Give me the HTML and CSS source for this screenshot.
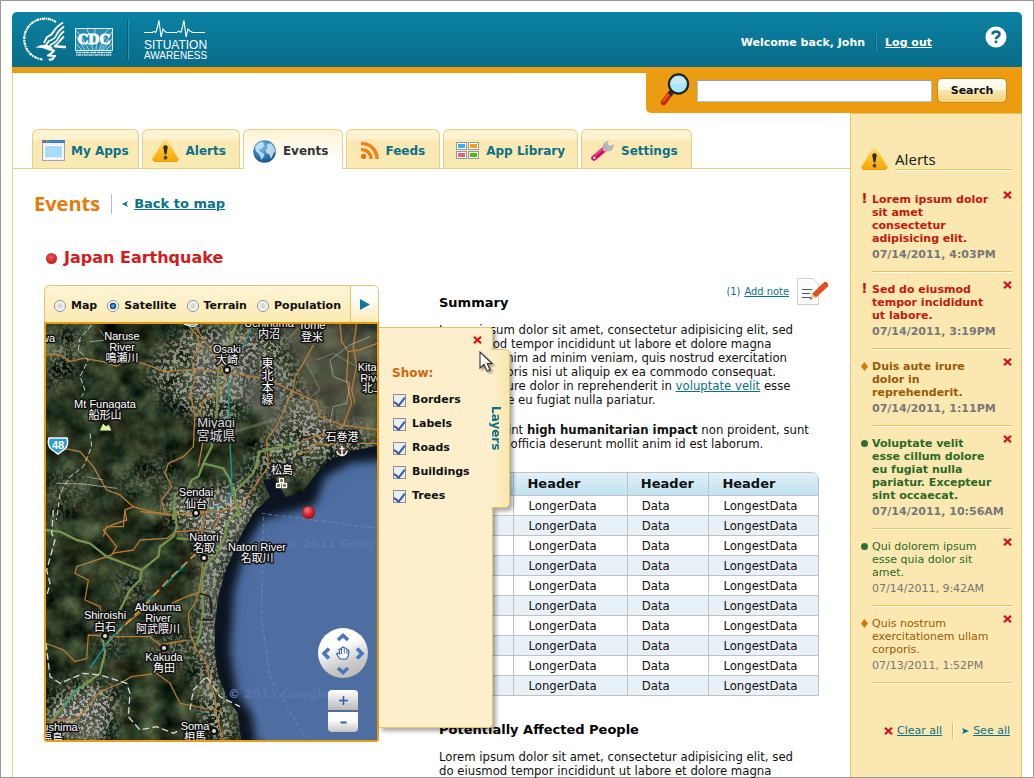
FILE: index.html
```html
<!DOCTYPE html>
<html lang="en">
<head>
<meta charset="utf-8">
<title>Situation Awareness - Events</title>
<link rel="stylesheet" href="styles.css">
</head>
<body>
<svg class="defs" width="0" height="0" aria-hidden="true">
  <defs>
    <linearGradient id="warn" x1="0" y1="0" x2="0" y2="1"><stop offset="0" stop-color="#fde28a"/><stop offset=".45" stop-color="#fcc02c"/><stop offset="1" stop-color="#fba806"/></linearGradient>
    <radialGradient id="redball" cx=".4" cy=".3" r=".7"><stop offset="0" stop-color="#f47c7c"/><stop offset=".6" stop-color="#d8232a"/><stop offset="1" stop-color="#a80f16"/></radialGradient>
    <symbol id="i-alert" viewBox="0 0 27 23">
      <path d="M11.200 1.800Q13.500-.8 15.800 1.800L26.300 19.500Q27.500 22.500 24 22.800H3Q-.5 22.500.7 19.500Z" fill="url(#warn)"/>
      <path d="M1 20.500Q1.500 22.600 4 22.600H23Q25.500 22.600 26 20.500" fill="none" stroke="#e09204" stroke-width=".8"/>
      <path d="M11.300 8.500Q11.300 6.200 13.500 6.200T15.700 8.500L14.300 15.600H12.700Z" fill="#2a2620"/><circle cx="13.500" cy="18.700" r="1.900" fill="#4b4436"/>
    </symbol>
    <symbol id="i-close" viewBox="0 0 9 8"><path d="M1 .8 8 7.200M8 .8 1 7.200" stroke="#d90d1e" stroke-width="2.200"/></symbol>
  </defs>
</svg>
<div class="frame">
  <header class="top">
    <div class="brand">
      <svg class="hhs" viewBox="0 0 44 44" role="img" aria-label="HHS">
        <path d="M19.500 42.500A20.500 20.500 0 1 1 33 5" fill="none" stroke="#fff" stroke-width="2.200" stroke-dasharray="3 .7 1.600 .6"/>
        <g fill="none" stroke="#fff" stroke-linejoin="round">
          <path d="M40 5.500Q33 10 31 14T24 20L21 26" stroke-width="1.800"/>
          <path d="M41 9.500Q35 14 33.500 18T26 24L23 28" stroke-width="1.800"/>
          <path d="M41 14Q36.500 18 35 21.500T28 27.500L26 31" stroke-width="1.800"/>
          <path d="M41 19.500Q38 22.500 36 25T31 29.500" stroke-width="1.800"/>
          <path d="M31 29Q39 30 43 30" stroke-width="2.400"/>
          <path d="M25 32 31 33.500Q28 37 25 38.500L33 39M26 42Q29 44 31 40" stroke-width="2.200"/>
        </g>
        <path d="M12 30.500Q18 27 24 27.500L30 31Q27 34 25 33Q20 30 12 30.500Z" fill="#fff"/>
      </svg>
      <svg class="cdc" viewBox="0 0 38 28" role="img" aria-label="CDC">
        <rect x=".5" y=".5" width="37" height="22" fill="#2b8dac" stroke="#d9eef4"/>
        <path d="M7 22 1 16M10 22 1 8M14 22 6 8M18 22 15 12M21 22 22 10M24 22 30 9M26 22 37 4M28 22 37 11M31 22 37 16M1 3 6 8M12 1l2 6M20 1v5M34 1 28 7" stroke="#c4e3ec" stroke-width=".8"/>
        <text x="19" y="16" text-anchor="middle" class="cdc-text">CDC</text>
        <path d="M1 24.500H37" stroke="#e8f5f8" stroke-width="1.300" stroke-dasharray="2 .4 3 .6 1 .4"/><path d="M1 27H37" stroke="#c9e4ec" stroke-width="1.400" stroke-dasharray="1.500 .6 3 .5"/>
      </svg>
      <div class="product">
        <svg class="pulse" viewBox="0 0 61 20" aria-hidden="true"><path d="M0 13.500H8.500Q10 11.500 11.500 13.500L12.500 11.500L15 1.500 17 18 19 10Q21.500 14 23.500 13.500H33Q35 10.500 36.500 13.500L37.500 12 40 1.500 42 18 44 10Q47 14 50 13.500H61" fill="none" stroke="#fff" stroke-width="1.100"/></svg>
        <span class="product-1">SITUATION</span>
        <span class="product-2">AWARENESS</span>
      </div>
    </div>
    <div class="account">
      <span class="welcome">Welcome back, John</span>
      <a class="logout" href="#">Log out</a>
      <button class="help" type="button" aria-label="Help">
        <svg viewBox="0 0 22 22"><circle cx="11" cy="11" r="10.500" fill="#fff"/><path d="M7.500 8.500Q7.500 5.500 11 5.500T14.500 8.300Q14.500 10 12.500 11 11 11.700 11 13.200" fill="none" stroke="#0a6c8c" stroke-width="2.600"/><rect x="9.600" y="14.600" width="2.800" height="2.600" rx="1" fill="#0a6c8c"/></svg>
      </button>
    </div>
  </header>

  <div class="shell">
    <form class="search" role="search">
      <svg class="lens" viewBox="0 0 30 34" aria-hidden="true">
        <path d="M10 21 3.500 29.500" stroke="#b92d04" stroke-width="5.500" stroke-linecap="round"/><path d="M9.500 20 3.500 28" stroke="#ef5a1c" stroke-width="2" stroke-linecap="round"/>
        <path d="M12.500 18 9.500 21.500" stroke="#2b2b2b" stroke-width="5"/>
        <circle cx="18.500" cy="11" r="9.600" fill="#a6e9fb" stroke="#1e2326" stroke-width="2.200"/>
        <path d="M11 10Q12 4 18.500 3.800T26 10Q23 11.500 18.500 11T11 10Z" fill="#d9e6e8" opacity=".8"/>
      </svg>
      <input class="search-box" type="text" aria-label="Search">
      <button class="search-btn" type="submit">Search</button>
    </form>

    <div class="columns">
      <main class="main">
        <nav class="tabs">
          <a class="tab snug" href="#"><svg class="w23" viewBox="0 0 23 21"><rect x=".5" y=".5" width="22" height="20" fill="#eef2f6" stroke="#9aa6b4"/><rect width="23" height="3" fill="#3f7fce"/><path d="M1 1.500H4" stroke="#e44" stroke-width="1.500"/><path d="M4 1.500H7" stroke="#5c4" stroke-width="1.500"/><rect x="2.500" y="5.500" width="18" height="12.500" fill="#a6dcf7" stroke="#fff"/></svg><span>My Apps</span></a>
          <a class="tab" href="#"><svg class="w27" viewBox="0 0 27 23"><use href="#i-alert"/></svg><span>Alerts</span></a>
          <a class="tab active" href="#"><svg class="w23" viewBox="0 0 23 23"><defs><radialGradient id="globe" cx=".4" cy=".3" r=".75"><stop offset="0" stop-color="#7fc0e8"/><stop offset=".6" stop-color="#2f78ad"/><stop offset="1" stop-color="#174f7e"/></radialGradient></defs><circle cx="11.500" cy="11.500" r="11.300" fill="url(#globe)"/><path d="M2 7Q4 3 8 2L11 2.500 10 4 11.500 5.500 9.500 7 8 9.500 6 9 6.500 11 9 12.500 11.500 14 10.500 17 8.500 20 7.500 17 6 14 3 11ZM13.500 6 15 3.500 18.500 3.500Q22 7 22.400 11L20.500 13.500 19 17 17.500 18.500 16.500 14.500 13.500 13 12.500 10 14.500 8.500Z" fill="#cfe6f4" opacity=".85"/></svg><span>Events</span></a>
          <a class="tab roomy" href="#"><svg class="w18" viewBox="0 0 18 17"><g fill="none" stroke="#f57e1a" stroke-width="3.400"><path d="M0 1.700A15 15 0 0 1 16 17"/><path d="M0 7.700A9 9 0 0 1 10 17"/></g><circle cx="2.600" cy="14.300" r="2.600" fill="#ee6c10"/></svg><span>Feeds</span></a>
          <a class="tab even" href="#"><svg class="w23" viewBox="0 0 23 17"><g fill="#fff" stroke="#96989c"><rect x=".5" y=".5" width="10" height="7"/><rect x="12.500" y=".5" width="10" height="7"/><rect x=".5" y="9.500" width="10" height="7"/><rect x="12.500" y="9.500" width="10" height="7"/></g><path fill="#3cb0ea" d="M2 2h7v4H2z"/><path fill="#eda21c" d="M14 2h7v4h-7z"/><path fill="#ee5c88" d="M2 11h7v4H2z"/><path fill="#41bf0c" d="M14 11h7v4h-7z"/></svg><span>App Library</span></a>
          <a class="tab" href="#"><svg class="w23" viewBox="0 0 23 21"><path d="M3 18 12.500 10" stroke="#d80b5c" stroke-width="5.500" stroke-linecap="round"/><path d="M4 15.500 11 9.500" stroke="#f3569a" stroke-width="1.200"/><circle cx="3.300" cy="17.700" r="1.200" fill="#fff"/><path d="M12 11Q9.500 2.500 18 .3L16.500 4 19 6 22.800 4Q23 12 15 11.500Z" fill="#b4b6b8"/></svg><span>Settings</span></a>
        </nav>

        <div class="crumb">
          <h1>Events</h1>
          <span class="back"><svg class="tri-l" viewBox="0 0 6 6"><path d="M6 0 4.500 3 6 6 0 3Z" fill="#0c7089"/></svg><a href="#">Back to map</a></span>
        </div>
        <h2 class="event"><span class="ball"></span>Japan Earthquake</h2>

        <div class="detail">
          <section class="map-card">
            <div class="map-bar">
              <fieldset class="modes" aria-label="Map type">
                <label><input type="radio" name="mode">Map</label>
                <label><input type="radio" name="mode" checked>Satellite</label>
                <label><input type="radio" name="mode">Terrain</label>
                <label><input type="radio" name="mode">Population</label>
              </fieldset>
              <button class="more" type="button" aria-label="More"><svg viewBox="0 0 10 11"><path d="M0 0 10 5.500 0 11Z" fill="#0b7a9c"/></svg></button>
            </div>
            <div class="map">
              <svg class="map-art" viewBox="46 324 331 416" role="img" aria-label="Satellite map">
                <defs>
                  <filter id="terrain" x="0" y="0" width="1" height="1" color-interpolation-filters="sRGB">
                    <feTurbulence type="fractalNoise" baseFrequency=".05" numOctaves="6" seed="11"/>
                    <feColorMatrix values=".4 .22 0 0 -.15  .36 .32 0 0 -.13  .25 .25 0 0 -.12  0 0 0 0 1"/>
                  </filter>
                  <filter id="speck" x="0" y="0" width="1" height="1" color-interpolation-filters="sRGB">
                    <feTurbulence type="fractalNoise" baseFrequency=".3" numOctaves="3" seed="3"/>
                    <feColorMatrix values="0 0 0 0 .7  0 0 0 0 .69  0 0 0 0 .66  9 0 0 0 -4.300"/>
                  </filter>
                  <filter id="soft" x="-.3" y="-.3" width="1.600" height="1.600"><feGaussianBlur stdDeviation="9"/></filter>
                  <filter id="soft5" x="-.3" y="-.3" width="1.600" height="1.600"><feGaussianBlur stdDeviation="4"/></filter>
                  <mask id="urban">
                    <g filter="url(#soft)" fill="#fff">
                      <path d="M185 325H280L300 390 340 430 370 425V460L330 450 290 420 260 360 240 420 210 430 165 400 145 370Z" opacity=".8"/>
                      <path d="M165 495 250 480 262 505 236 540 215 600 218 680 240 740H205L195 640 205 560 190 530 165 520Z"/>
                      <path d="M240 470 280 420 320 420 340 460 270 480Z" opacity=".8"/>
                      <path d="M46 330 90 330 70 380 46 390Z" opacity=".5"/>
                      <path d="M46 700 80 680 120 690 110 740H46Z"/>
                      <path d="M95 625 115 615 125 650 105 660ZM150 640 185 630 190 665 160 665Z" opacity=".6"/>
                      <path d="M110 580 140 570 150 600 125 610Z" opacity=".5"/>
                      <path d="M46 470 95 470 90 500 60 520 46 560Z" opacity=".3"/>
                      <path d="M110 480 170 450 180 480 130 500Z" opacity=".35"/>
                    </g>
                  </mask>
                  <path id="sea" d="M377 446 350 451 328 461 314 476 303 492 286 497 275 478 263 480 270 497 254 512 240 537 227 567 219 593 215 622 215 652 218 675 228 700 238 713 241 740H377Z"/>
                  <clipPath id="seaclip"><use href="#sea"/></clipPath>
                </defs>
                <rect x="46" y="324" width="331" height="416" filter="url(#terrain)"/>
                <path d="M275 324H377V430L330 445 290 425 300 380Z" fill="#7d7466" opacity=".45" filter="url(#soft5)"/>
                <path d="M190 340 250 330 290 380 280 440 240 400 190 400ZM175 490 250 490 250 520 222 560 212 640 214 700 206 700 200 600 200 540ZM46 715 85 690 110 700 100 740H46Z" fill="#70716a" opacity=".55" filter="url(#soft5)"/>
                <path d="M205 440 240 430 290 415 270 405 300 390" fill="none" stroke="#8b8470" stroke-width="3" opacity=".4"/>
                <g mask="url(#urban)"><rect x="46" y="324" width="331" height="416" filter="url(#speck)"/></g>
                <use href="#sea" fill="#0b1420"/>
                <g clip-path="url(#seaclip)">
                  <path d="M385 460 350 463 325 477 315 505 290 512 262 520 245 550 234 590 230 650 236 690 252 715 256 745H385Z" fill="#4c6c9f" filter="url(#soft5)"/>
                  <path d="M385 475 350 480 328 500 315 520 285 525 266 540 252 570 245 620 250 690 268 745H385Z" fill="#4e6ea2"/>
                </g>
                <g transform="translate(40 280) scale(.3333)" fill="none" stroke-linejoin="round">
                  <g stroke="#b87d35" stroke-width="4">
                    <path d="M10 222 60 225 90 245 130 235 190 245 230 258 265 243 310 250 375 275 460 268 590 280 690 300 760 335 830 365 840 410 905 435 1012 450"/>
                    <path d="M440 130 470 165 480 200 455 240 465 300 450 340 465 400 460 500 430 530 385 550 375 580 395 620 365 660 375 700"/>
                    <path d="M465 140 500 190 530 230 560 300 535 345 490 360 480 400 490 480 475 560"/>
                    <path d="M900 130 905 185 925 215 920 300 935 370 905 450M950 130 940 200 950 260 935 330 945 370"/>
                    <path d="M820 195 790 250 765 290 760 330 740 370 710 440 680 480 685 560 650 610 600 680"/>
                    <path d="M770 500 790 480 860 460 930 455 905 485 860 495 830 490 805 515 770 520M960 490H1012"/>
                    <path d="M45 500 120 515 160 560 200 630 240 645 280 680 330 695 400 705 540 695 600 675"/>
                    <path d="M1012 190 960 210 925 215M590 240 610 170 640 130"/>
                    <path d="M280 680 255 690 250 740 200 740 190 770"/>
                  </g>
                  <g stroke="#74954d" stroke-width="7">
                    <path d="M590 130 570 190 540 210 535 280 530 400 515 500 495 540 475 590 455 600 440 640 405 640 400 720"/>
                    <path d="M765 497 700 505 660 515 640 580 600 620 580 640 590 670 600 720M490 550 550 565 570 600 580 640"/>
                  </g>
                  <g stroke="#c9ccc4" stroke-width="3">
                    <path d="M155 135 120 175 115 210 145 240 120 290 135 330 125 350M150 460 155 500 130 560 90 590 60 640 50 720" stroke-dasharray="16 8"/>
                    <path d="M180 150 200 180 150 185M50 610 130 612 230 625M140 590 190 600" stroke-width="2"/>
                    <path d="M990 170 930 195 870 240 880 290 930 310 920 370 880 380 870 430" stroke="#c8c0b4" opacity=".6"/>
                    <path d="M780 140 700 220 640 200M800 250 840 330 800 360M950 260 880 220 830 240" opacity=".4"/>
                  </g>
                  <path d="M635 140 600 220M565 290 568 460 575 580 575 640 560 660M540 675 510 695" stroke="#17989b" stroke-width="4"/>
                </g>
                <g transform="translate(40 510) scale(.3333)" fill="none" stroke-linejoin="round">
                  <g stroke="#b57a33" stroke-width="4">
                    <path d="M255 0 260 30 215 45 190 60 230 110 215 135 110 170 105 190 145 210 135 270 180 290 190 345"/>
                    <path d="M215 130 280 120 300 90 380 85 410 65 490 60M300 5 400 15 530 0M480 0 495 30 485 60 500 110 540 80"/>
                    <path d="M18 400 70 420 105 455 140 445 145 375 210 380 330 380 360 405 440 390"/>
                    <path d="M490 145 480 230 465 280 445 310 450 370 470 420 500 460 510 520 525 560 530 620 550 690"/>
                    <path d="M350 490 275 500 240 520 180 545 110 630 20 630M350 490 390 520 420 580 470 590 545 605M540 15 520 60"/>
                    <path d="M395 280 440 260 480 245M260 340 310 300 330 270"/>
                  </g>
                  <g stroke="#74954d" stroke-width="7">
                    <path d="M18 60 60 65 110 90 150 100 200 140 305 180 355 140 360 110 400 80 410 50 405 0"/>
                    <path d="M305 180 300 210 270 240 245 290 220 330 185 370 195 430 180 490 140 520 110 540 70 590 30 640"/>
                    <path d="M600 0 560 40 555 80 530 130 500 160 485 210 490 300 480 370 470 405M410 85 490 90"/>
                  </g>
                  <path d="M500 100 390 205 300 300 240 360 200 400" stroke="#ef962c" stroke-width="5" stroke-dasharray="26 14"/>
                  <path d="M435 165 370 230M340 255 320 275M250 345 200 400 150 475M120 525 75 590M520 0 510 10" stroke="#17989b" stroke-width="4"/>
                  <g stroke="#d6d8d2" stroke-width="4" stroke-dasharray="20 10">
                    <path d="M40 0 35 70 45 90 20 180 30 220 20 260M18 400 30 500 60 520 130 490 180 495 260 520 270 550 265 620 300 660 350 650 400 670 460 640 M450 600 460 540 500 500 540 560 600 590"/>
                  </g>
                  <path d="M480 250 510 260 515 310M485 330 520 330" stroke="#151515" stroke-width="4"/>
                  <path d="M665 10 1012 55M670 20 665 330 690 500 800 690" stroke="#8290c4" stroke-width="2" stroke-dasharray="12 8"/>
                </g>
                <g class="wm"><text x="228" y="698">© 2011 Google</text><text x="286" y="548">© 2011 Goog</text></g>
                <g class="lbl">
                  <text x="48" y="342">wa</text>
                  <text x="122" y="340"><tspan x="122">Naruse</tspan><tspan x="122" dy="11">River</tspan><tspan x="122" dy="11">鳴瀬川</tspan></text>
                  <text x="227" y="353">Osaki<tspan x="227" dy="11">大崎</tspan></text>
                  <text x="269" y="327">Uchinuma<tspan x="269" dy="11">内沼</tspan></text>
                  <text x="312" y="329">Tome<tspan x="312" dy="12">登米</tspan></text>
                  <text x="105" y="408">Mt Funagata<tspan x="105" dy="11">船形山</tspan></text>
                  <text x="373" y="371">Kitaka<tspan x="373" dy="11">River</tspan><tspan x="373" dy="10">北上</tspan></text>
                  <text x="196" y="496">Sendai<tspan x="196" dy="12">仙台</tspan></text>
                  <text x="204" y="541">Natori<tspan x="204" dy="11">名取</tspan></text>
                  <text x="257" y="551">Natori River<tspan x="257" dy="11">名取川</tspan></text>
                  <text x="105" y="619">Shiroishi<tspan x="105" dy="12">白石</tspan></text>
                  <text x="158" y="611">Abukuma<tspan x="158" dy="11">River</tspan><tspan x="158" dy="11">阿武隈川</tspan></text>
                  <text x="164" y="661">Kakuda<tspan x="164" dy="11">角田</tspan></text>
                  <text x="60" y="731">ushima<tspan x="52" dy="11">福島</tspan></text>
                  <text x="195" y="730">Soma<tspan x="195" dy="11">相馬</tspan></text>
                  <text x="342" y="441">石巻港</text>
                  <text x="282" y="474">松島</text>
                  <text class="big" x="216" y="427">Miyagi<tspan x="216" dy="13">宮城県</tspan></text>
                  <text class="vert" x="266" y="357">東北本線</text>
                </g>
                <g fill="#ddd" stroke="#111" stroke-width="2"><circle cx="227" cy="370" r="3"/><circle cx="196" cy="513" r="3"/><circle cx="204" cy="558" r="3"/><circle cx="105" cy="636" r="3"/><circle cx="164" cy="648" r="3"/><circle cx="214" cy="731" r="3"/></g>
                <path d="M99 431 103 423 106 426 109 424 112 431Z" fill="#d9f49b" stroke="#222"/>
                <path d="M49 438H67Q69 445 65 449L58 454 51 449Q47 445 49 438Z" fill="#2a9bd3" stroke="#fff" stroke-width="1.500"/><text class="shield" x="58" y="449">48</text>
                <path d="M184 324H198Q194 328 190 326Z" fill="#2a9bd3" stroke="#fff"/>
                <g fill="#7b5a4e" stroke="#fff" stroke-width="1.300"><rect x="279.500" y="478.500" width="4" height="4"/><rect x="276.500" y="483.500" width="4" height="4"/><rect x="282.500" y="483.500" width="4" height="4"/></g>
                <g><circle cx="342" cy="451" r="5.500" fill="#5b3c36" opacity=".8"/><path d="M342 446V455M339.500 448.500H344.500M337 451Q337.500 455 342 455.500 346.500 455 347 451" fill="none" stroke="#fff" stroke-width="1.400"/></g>
                <circle cx="308.500" cy="512.500" r="6.200" fill="url(#redball)" stroke="#8d1218" stroke-width=".6"/>
              </svg>
              <div class="controls">
                <button class="pan" type="button" aria-label="Pan map">
                  <svg viewBox="0 0 50 50"><g fill="none" stroke="#4877c0" stroke-width="3.600"><path d="M20 12 25 7.500 30 12M20 40 25 44.500 30 40M11 20.500 6 25.500 11 30.500M39 20.500 44 25.500 39 30.500"/></g><path d="M22 31 18.500 26Q20 24 22 26.500L21 21.500Q22.300 20 23.500 22L24 19.500Q25.500 18.500 26.300 20L27.500 20Q29 20 29 22 30.500 21.500 31 23L30 28.500 28.500 31Z" fill="#fff" stroke="#2c5fb0" stroke-width="1.100"/><path d="M23.500 22V26M26.300 20.500V25.500M29 22V26" stroke="#2c5fb0" stroke-width=".9"/></svg>
                </button>
                <button class="zoom in" type="button" aria-label="Zoom in"><svg viewBox="0 0 11 11"><path d="M5.500 1V10M1 5.500H10" stroke="#2f5ea8" stroke-width="1.600"/></svg></button>
                <button class="zoom out" type="button" aria-label="Zoom out"><svg viewBox="0 0 11 11"><path d="M2.500 5.500H8.500" stroke="#2f5ea8" stroke-width="2"/></svg></button>
              </div>
            </div>
            <aside class="layers">
              <div class="layers-body">
                <button class="x" type="button" aria-label="Close layers"><svg viewBox="0 0 9 8"><use href="#i-close"/></svg></button>
                <h3>Show:</h3>
                <label><input type="checkbox" checked>Borders</label>
                <label><input type="checkbox" checked>Labels</label>
                <label><input type="checkbox" checked>Roads</label>
                <label><input type="checkbox" checked>Buildings</label>
                <label><input type="checkbox" checked>Trees</label>
              </div>
              <button class="layers-tab" type="button">Layers</button>
              <svg class="cursor" viewBox="0 0 18 24" aria-hidden="true"><path d="M1 1V17L5 13.500 8 20 11 18.700 8.200 12.500H13Z" fill="#fff" stroke="#333" stroke-width="1.100"/></svg>
            </aside>
          </section>

          <article class="article">
            <div class="article-head">
              <h3>Summary</h3>
              <span class="note">(1) <a href="#">Add note</a>
                <svg viewBox="0 0 31 27"><path d="M.5.500H16L21.500 6V26.500H.5Z" fill="#fcfcfc" stroke="#cfcfcf"/><path d="M5 11.500H15M5 15.500H13M5 19.500H14" stroke="#555"/><path d="M15 16 26 5 30.500 9 19 19.500Z" fill="#e2501c"/><path d="M26 5Q28.500 3 30.500 5.500T30.500 9Z" fill="#cc3f10"/><path d="M15 16 13 21.500 19 19.500Z" fill="#e9c98a"/><path d="M13.700 19.500 13 21.500 15 20.900Z" fill="#222"/></svg>
              </span>
            </div>
            <p>Lorem ipsum dolor sit amet, consectetur adipisicing elit, sed<br>do eiusmod tempor incididunt ut labore et dolore magna<br>aliqua. Ut enim ad minim veniam, quis nostrud exercitation<br>ullamco laboris nisi ut aliquip ex ea commodo consequat.<br>Duis aute irure dolor in reprehenderit in <a href="#">voluptate velit</a> esse<br>cillum dolore eu fugiat nulla pariatur.</p>
            <p>Excepteur sint <b>high humanitarian impact</b> non proident, sunt<br>in culpa qui officia deserunt mollit anim id est laborum.</p>
            <table>
              <colgroup><col class="c1"><col class="c2"><col class="c3"><col class="c4"></colgroup>
              <thead><tr><th>Header</th><th>Header</th><th>Header</th><th>Header</th></tr></thead>
              <tbody>
                <tr><td>Data</td><td>LongerData</td><td>Data</td><td>LongestData</td></tr>
                <tr><td>Data</td><td>LongerData</td><td>Data</td><td>LongestData</td></tr>
                <tr><td>Data</td><td>LongerData</td><td>Data</td><td>LongestData</td></tr>
                <tr><td>Data</td><td>LongerData</td><td>Data</td><td>LongestData</td></tr>
                <tr><td>Data</td><td>LongerData</td><td>Data</td><td>LongestData</td></tr>
                <tr><td>Data</td><td>LongerData</td><td>Data</td><td>LongestData</td></tr>
                <tr><td>Data</td><td>LongerData</td><td>Data</td><td>LongestData</td></tr>
                <tr><td>Data</td><td>LongerData</td><td>Data</td><td>LongestData</td></tr>
                <tr><td>Data</td><td>LongerData</td><td>Data</td><td>LongestData</td></tr>
                <tr><td>Data</td><td>LongerData</td><td>Data</td><td>LongestData</td></tr>
              </tbody>
            </table>
            <h3 class="people">Potentially Affected People</h3>
            <p class="last">Lorem ipsum dolor sit amet, consectetur adipisicing elit, sed<br>do eiusmod tempor incididunt ut labore et dolore magna</p>
          </article>
        </div>
      </main>

      <aside class="side">
        <div class="side-head"><svg viewBox="0 0 27 23"><use href="#i-alert"/></svg><h2>Alerts</h2></div>
        <ul class="alerts">
          <li class="red new"><span class="mark bang">!</span><div><p>Lorem ipsum dolor sit amet consectetur adipisicing elit.</p><time>07/14/2011, 4:03PM</time></div><button class="x" type="button" aria-label="Dismiss"><svg viewBox="0 0 9 8"><use href="#i-close"/></svg></button></li>
          <li class="red new"><span class="mark bang">!</span><div><p>Sed do eiusmod tempor incididunt ut labore.</p><time>07/14/2011, 3:19PM</time></div><button class="x" type="button" aria-label="Dismiss"><svg viewBox="0 0 9 8"><use href="#i-close"/></svg></button></li>
          <li class="amber new"><svg class="mark" viewBox="0 0 7 9"><path d="M3.500 0 7 4.500 3.500 9 0 4.500Z" fill="#d07a0a"/></svg><div><p>Duis aute irure dolor in reprehenderit.</p><time>07/14/2011, 1:11PM</time></div><button class="x" type="button" aria-label="Dismiss"><svg viewBox="0 0 9 8"><use href="#i-close"/></svg></button></li>
          <li class="green new"><svg class="mark" viewBox="0 0 7 9"><circle cx="3.500" cy="4.500" r="3.500" fill="#2f7030"/></svg><div><p>Voluptate velit esse cillum dolore eu fugiat nulla pariatur. Excepteur sint occaecat.</p><time>07/14/2011, 10:56AM</time></div><button class="x" type="button" aria-label="Dismiss"><svg viewBox="0 0 9 8"><use href="#i-close"/></svg></button></li>
          <li class="green"><svg class="mark" viewBox="0 0 7 9"><circle cx="3.500" cy="4.500" r="3.500" fill="#2f7030"/></svg><div><p>Qui dolorem ipsum esse quia dolor sit amet.</p><time>07/14/2011, 9:42AM</time></div><button class="x" type="button" aria-label="Dismiss"><svg viewBox="0 0 9 8"><use href="#i-close"/></svg></button></li>
          <li class="amber"><svg class="mark" viewBox="0 0 7 9"><path d="M3.500 0 7 4.500 3.500 9 0 4.500Z" fill="#d07a0a"/></svg><div><p>Quis nostrum exercitationem ullam corporis.</p><time>07/13/2011, 1:52PM</time></div><button class="x" type="button" aria-label="Dismiss"><svg viewBox="0 0 9 8"><use href="#i-close"/></svg></button></li>
        </ul>
        <div class="side-foot">
          <span class="clear"><svg class="ic" viewBox="0 0 9 8"><use href="#i-close"/></svg><a href="#">Clear all</a></span>
          <span class="see"><svg class="tri" viewBox="0 0 7 6"><path d="M0 0 7 3 0 6 1.500 3Z" fill="#0c7089"/></svg><a href="#">See all</a></span>
        </div>
      </aside>
    </div>
  </div>
</div>
</body>
</html>
```
FILE: styles.css
```css
* { box-sizing: border-box; }
body, h1, h2, h3, p, ul, fieldset { margin: 0; padding: 0; }
body { font: 13px/14px "DejaVu Sans Condensed", "DejaVu Sans", sans-serif; color: #111; background: #fff; }
svg { display: block; }
button { border: 0; padding: 0; background: none; font: inherit; color: inherit; cursor: pointer; }
a { color: #0c7089; }
ul { list-style: none; }
fieldset { border: 0; min-width: 0; }
.defs { position: absolute; }

.frame { display: flex; flex-direction: column; min-height: 100vh; padding: 11px 11px 0; border: 1px solid #999; }

/* Header */
.top { display: flex; justify-content: space-between; height: 55px; border-radius: 5px 5px 0 0; background: linear-gradient(#0b82a4, #096b88); color: #fff; }
.brand { display: flex; align-items: flex-start; padding: 5px 0 0 11px; }
.hhs { width: 44px; height: 44px; }
.cdc { width: 38px; height: 28px; margin: 11px 0 0 8px; }
.cdc-text { font: bold 15px "Liberation Serif", serif; fill: #fff; stroke: #fff; stroke-width: 1px; }
.product { display: flex; flex-direction: column; margin: 2px 0 0 15px; padding-left: 15px; border-left: 1px solid #2f93ae; box-shadow: -1px 0 #075a73; height: 41px; font-family: "Liberation Sans", Arial, sans-serif; }
.pulse { width: 61px; height: 20px; flex: none; }
.product-1 { font-size: 12px; line-height: 12px; }
.product-2 { font-size: 10px; line-height: 10px; }
.account { display: flex; align-items: flex-start; padding-right: 15px; font: bold 11px/16px "DejaVu Sans", sans-serif; }
.welcome { margin-top: 22px; padding: 1px 10px 0 0; border-right: 1px solid #07617b; }
.logout { margin: 22px 53px 0 0; padding: 1px 0 0 8px; color: #fff; border-left: 1px solid #3295b0; }
.help { width: 22px; height: 22px; margin-top: 14px; }

.shell { display: flex; flex: 1; flex-direction: column; border-top: 6px solid #ec9c10; }
.search { display: flex; align-items: flex-start; align-self: flex-end; width: 376px; height: 40px; padding: 0 15px 0 14px; border-radius: 0 0 0 5px; background: #ec9c10; }
.lens { flex: none; width: 30px; height: 34px; }
.search-box { flex: 1; min-width: 0; height: 22px; margin: 7px 5px 0 7px; border: 1px solid #a9c3dc; border-top-color: #8fa0b8; background: #fff; }
.search-btn { width: 70px; height: 25px; margin-top: 5px; border: 1px solid #c88a10; border-radius: 5px; background: linear-gradient(#fff 0, #fdf6e0 48%, #f9e6b4 50%, #f3d27c); font: bold 11px/14px "DejaVu Sans", sans-serif; color: #111; }
.columns { display: flex; flex: 1; }
.main { flex: 1; min-width: 0; margin-top: -40px; padding-top: 56px; border-left: 1px solid #e8cf86; }

/* Tabs */
.tabs { display: flex; gap: 3px; padding-left: 19px; border-bottom: 1px solid #e8cf86; }
.tab { display: flex; align-items: center; gap: 7px; height: 39px; padding: 3px 13px 0 9px; border: 1px solid #e8cf86; border-bottom: 0; border-radius: 6px 6px 0 0; background: linear-gradient(#fdf3d2 0 9px, #fbe9b3 10px); font: bold 12px/16px "DejaVu Sans", sans-serif; text-decoration: none; white-space: nowrap; }
.tab.active { height: 40px; margin-bottom: -1px; background: linear-gradient(#fdf3d4, #fff 80%); color: #333; }
.tab.snug { gap: 6px; padding-right: 9px; }
.tab.roomy { padding: 3px 14px 0; }
.tab.even { padding: 3px 12px 0; }
.w18 { width: 18px; height: 17px; }
.w23 { width: 23px; }
.w27 { width: 27px; }

.crumb { display: flex; align-items: center; margin: 22px 0 0 21px; }
.crumb h1 { font: bold 20px/26px "Open Sans", sans-serif; color: #e57a0c; }
.back { display: flex; align-items: center; gap: 6px; height: 20px; margin-left: 11px; padding-left: 10px; border-left: 1px solid #bbb; font: bold 13px/18px "DejaVu Sans", sans-serif; }
.tri-l { width: 6px; height: 6px; }
.event { display: flex; align-items: center; gap: 7px; margin: 31px 0 0 33px; font: bold 16px/20px "DejaVu Sans", sans-serif; color: #d01c20; }
.ball { width: 11px; height: 11px; border-radius: 50%; background: radial-gradient(circle at 45% 40%, #ee5a5a, #cf2026 60%, #ad1519); }

/* Map */
.detail { display: grid; grid-template-columns: 335px 1fr; gap: 60px; padding: 17px 31px 0; }
.map-card { position: relative; align-self: start; }
.map-bar { display: flex; height: 37px; border: 1px solid #e3c56e; border-bottom: 0; border-radius: 6px 6px 0 0; background: linear-gradient(#fdf4d6, #faeab2); overflow: hidden; }
.modes { display: flex; flex: 1; align-items: center; justify-content: space-between; padding: 3px 9px 0 9px; }
.modes label { display: flex; align-items: center; gap: 5px; font: bold 11px/14px "DejaVu Sans", sans-serif; }
.modes input { appearance: none; width: 12px; height: 12px; margin: 0; border: 1px solid #8d8f91; border-radius: 50%; background: radial-gradient(circle, #d4d6d8 20%, #fff 70%); }
.modes input:checked { background: radial-gradient(circle, #4fb4e4 8%, #123c66 42%, #fff 52%); }
.more { display: grid; place-items: center; width: 28px; border-left: 1px solid #e3c56e; background: linear-gradient(#fff 30%, #faeab2); }
.more svg { width: 10px; height: 11px; }
.map { position: relative; border: 2px solid #ec9c10; border-radius: 0 0 3px 3px; overflow: hidden; background: #2a3319; }
.map-art { width: 100%; height: auto; }
.lbl text, .shield { font: 11px "Liberation Sans", "Noto Sans CJK JP", sans-serif; fill: #fff; stroke: #111; stroke-width: 3px; paint-order: stroke; stroke-linejoin: round; text-anchor: middle; }
.lbl text.big { font-size: 13px; fill: #d8d8d8; }
.lbl text.vert { font-size: 12px; writing-mode: vertical-rl; text-anchor: start; }
.shield { font-weight: bold; stroke: none; }
.wm text { font: bold 12px "DejaVu Sans", sans-serif; fill: #5877a9; }
.controls { position: absolute; right: 9px; bottom: 8px; display: flex; flex-direction: column; align-items: center; }
.pan { width: 50px; height: 50px; margin-bottom: 12px; border-radius: 50%; background: linear-gradient(160deg, #fff 35%, #c9c9c9 70%, #b5b5b5); }
.zoom { display: grid; place-items: center; width: 30px; height: 20px; background: linear-gradient(#fff, #b9b9b9); }
.zoom svg { width: 11px; height: 11px; }
.zoom.in { margin-bottom: 2px; border-radius: 4px 4px 0 0; }
.zoom.out { border-radius: 0 0 4px 4px; background: linear-gradient(#fff 40%, #c4c4c4); }

/* Layers drawer lies over the article */
.layers { position: absolute; top: 42px; bottom: 14px; left: 100%; width: 114px; filter: drop-shadow(3px 3px 2px rgba(0, 0, 0, .35)); }
.layers-body { position: relative; display: flex; flex-direction: column; gap: 10px; height: 100%; padding: 38px 0 0 13px; border: 1px solid #e3c56e; border-left: 0; border-radius: 0 4px 4px 0; background: #feefcc; }
.layers-body h3 { margin-bottom: 3px; font: bold 12px/14px "DejaVu Sans", sans-serif; color: #cf670c; }
.layers-body label { display: flex; align-items: center; gap: 6px; font: bold 11px/14px "DejaVu Sans", sans-serif; }
.layers-body input { appearance: none; width: 13px; height: 13px; margin: 0 0 0 1px; border: 1px solid #8e8f8f; background: #e9edf4; display: grid; place-content: start center; }
.layers-body input:checked::after { content: ""; width: 5px; height: 9px; border: solid #3b57a6; border-width: 0 2px 2px 0; transform: rotate(38deg); }
.layers-body .x { position: absolute; top: 8px; right: 10px; }
.x svg, .ic { width: 9px; height: 8px; }
.layers-tab { position: absolute; top: 22px; left: 112px; width: 19px; height: 159px; padding-right: 5px; border: 1px solid #e3c56e; border-left: 0; border-radius: 0 5px 5px 0; background: linear-gradient(90deg, #feefcc, #f9e7ac); writing-mode: vertical-rl; font: bold 12px/16px "DejaVu Sans", sans-serif; color: #0c7089; }
.cursor { position: absolute; top: 24px; left: 100px; width: 18px; height: 24px; filter: drop-shadow(2px 2px 1px rgba(0, 0, 0, .4)); }

/* Article */
.article { min-width: 0; margin-top: -8px; }
.article h3 { font: bold 13px/16px "DejaVu Sans", sans-serif; color: #000; }
.article-head { display: flex; align-items: flex-start; justify-content: space-between; height: 46px; margin-right: -9px; }
.article-head h3 { margin-top: 18px; }
.note { display: flex; align-items: center; gap: 4px; padding-top: 1px; font-size: 11px; color: #0c7089; }
.note svg { width: 31px; height: 27px; margin-left: 4px; }
.article p { margin-bottom: 16px; }
.article table { width: 100%; margin: 21px 0 26px; border: 1px solid #c0c2c4; border-radius: 0 7px 0 0; border-spacing: 0; table-layout: fixed; overflow: hidden; }
.c1 { width: 73px; } .c2 { width: 30%; } .c3 { width: 81px; } .c4 { width: 29%; }
th { height: 22px; padding: 0 0 0 13px; background: linear-gradient(#e3f0fa, #bfe2f0); font: bold 13px/14px "DejaVu Sans", sans-serif; text-align: left; }
td { height: 20px; padding: 0 0 0 14px; border-top: 1px solid #c0c2c4; }
th + th, td + td { border-left: 1px solid #c0c2c4; }
tbody tr:nth-child(even) { background: #e8f0f8; }
.article .people { margin-bottom: 12px; }
.article .last { margin-bottom: -2px; }

/* Alerts */
.side { width: 172px; padding: 33px 9px 0 10px; border: 1px solid #e3c56e; border-bottom: 0; background: #fbe8b0; }
.side-head { display: flex; align-items: flex-end; gap: 7px; }
.side-head svg { width: 27px; height: 23px; }
.side-head h2 { flex: 1; padding-bottom: 1px; font: 15px/18px "Noto Sans", sans-serif; color: #222; border-bottom: 1px solid #e3c56e; box-shadow: 0 1px #fffbe8; }
.alerts { margin-top: 13px; font: 11px/13px "DejaVu Sans", sans-serif; }
.alerts li { display: grid; grid-template-columns: 11px 1fr 18px; position: relative; padding: 10px 0 12px; }
.alerts li::after { content: ""; position: absolute; left: 11px; right: 0; bottom: 0; height: 2px; background: linear-gradient(#dfc46a 50%, #fffbe8 50%); }
.alerts div { min-width: 0; }
.alerts time { display: block; margin-top: 3px; color: #777; white-space: nowrap; }
.alerts .new { font-weight: bold; }
.alerts .x { justify-self: end; align-self: start; margin-top: -2px; }
.mark { width: 7px; height: 9px; margin-top: 2px; }
.bang { margin-top: -1px; text-align: center; font-size: 14px; }
.red { color: #c01a0c; } .amber { color: #9a5a05; } .green { color: #2a6a28; }
.side-foot { display: flex; justify-content: flex-end; margin-top: 38px; padding-right: 2px; font: 11px/17px "DejaVu Sans", sans-serif; }
.side-foot span { display: flex; align-items: center; gap: 4px; }
.clear { padding-right: 10px; border-right: 1px solid #dfc46a; }
.see { padding-left: 8px; border-left: 1px solid #fffbe8; }
.tri { width: 7px; height: 6px; }
```
